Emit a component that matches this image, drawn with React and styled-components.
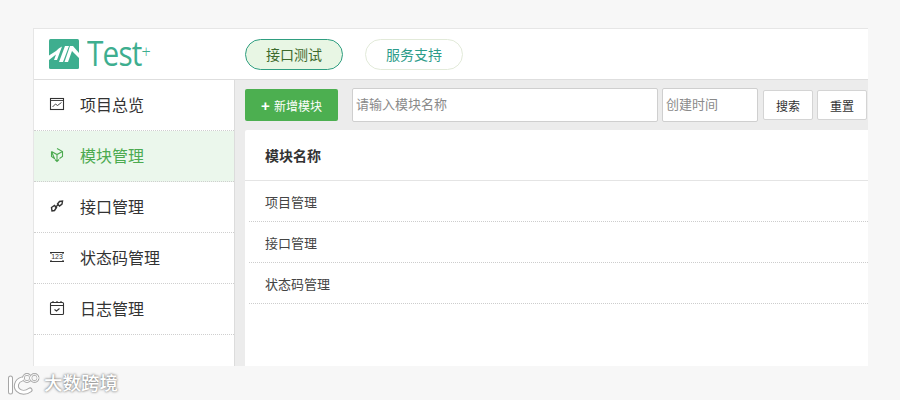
import styled, { createGlobalStyle } from "styled-components";

const GlobalStyle = createGlobalStyle`
  html, body {
    margin: 0;
    padding: 0;
    background: #f7f7f7;
    font-family: "Liberation Sans", "Noto Sans CJK SC", sans-serif;
    color: #333;
  }
  * {
    box-sizing: border-box;
  }
`;

const Page = styled.div`
  position: relative;
  width: 900px;
  height: 400px;
  padding: 28px 32px 0 33px;
  overflow: hidden;
`;

const Shell = styled.div`
  width: 835px;
  height: 338px;
  background: #fff;
  border-top: 1px solid #e6e6e6;
  border-left: 1px solid #e6e6e6;
  display: flex;
  flex-direction: column;
  overflow: hidden;
`;

const Header = styled.header`
  height: 51px;
  flex: none;
  display: flex;
  align-items: center;
  padding-left: 15px;
  border-bottom: 1px solid #dedede;
`;

const Logo = styled.div`
  width: 196px;
  display: flex;
  align-items: center;
  gap: 8px;
  color: #3eae8f;
`;

const LogoText = styled.span`
  font-family: "Open Sans", sans-serif;
  font-weight: 400;
  font-size: 35px;
  line-height: 32px;
  letter-spacing: -1px;
  display: inline-block;
  transform: scaleX(0.85);
  transform-origin: left center;
  position: relative;
  top: -1px;

  sup {
    font-size: 19px;
    font-weight: 300;
    line-height: 0;
    vertical-align: 8px;
    letter-spacing: 0;
  }
`;

const Nav = styled.nav`
  display: flex;
  gap: 22px;
`;

const Pill = styled.a`
  width: 98px;
  height: 31px;
  border-radius: 16px;
  display: flex;
  align-items: center;
  justify-content: center;
  font-size: 14px;
  padding-bottom: 1px;
  border: 1px solid ${(p) => (p.$active ? "#2f9e80" : "#e2ead9")};
  background: ${(p) => (p.$active ? "#e8f6e4" : "#fff")};
  color: ${(p) => (p.$active ? "#3c6a2c" : "#2d9c8a")};
`;

const Body = styled.div`
  flex: 1;
  display: flex;
  min-height: 0;
`;

const Sidebar = styled.aside`
  width: 201px;
  flex: none;
  border-right: 1px solid #dcdcdc;
  background: #fff;
`;

const MenuItem = styled.div`
  height: 51px;
  display: flex;
  align-items: center;
  padding: 0 0 2px 15px;
  gap: 15px;
  font-size: 16px;
  border-bottom: 1px dotted #cfcfcf;
  background: ${(p) => (p.$active ? "#ebf7ec" : "#fff")};
  color: ${(p) => (p.$active ? "#4caa50" : "#333")};

  svg {
    width: 16px;
    height: 16px;
    flex: none;
  }
`;

const Content = styled.main`
  flex: 1;
  min-width: 0;
  background: #ececec;
  display: flex;
  flex-direction: column;
  padding-left: 10px;
`;

const Toolbar = styled.div`
  height: 50px;
  flex: none;
  display: flex;
  align-items: center;
`;

const AddButton = styled.button`
  width: 93px;
  height: 32px;
  margin-right: 14px;
  border: 0;
  border-radius: 2px;
  background: #4caf50;
  color: #fff;
  font: inherit;
  font-size: 12px;
  padding: 0;
  display: flex;
  align-items: center;
  justify-content: center;
  gap: 4px;

  b {
    font-size: 15px;
    line-height: 15px;
  }
`;

const Field = styled.input`
  width: ${(p) => p.$w}px;
  height: 34px;
  margin-right: 4px;
  border: 1px solid #cfcfcf;
  border-radius: 2px;
  padding: 0 3px 2px;
  background: #fff;
  font: inherit;
  font-size: 13px;

  &::placeholder {
    color: #8a8a8a;
    opacity: 1;
  }
`;

const PlainButton = styled.button`
  width: 50px;
  height: 30px;
  margin-left: ${(p) => p.$ml || 0}px;
  border: 1px solid #d4d4d4;
  border-radius: 2px;
  background: #fff;
  color: #333;
  font: inherit;
  font-size: 12px;
  padding: 0;
`;

const Table = styled.section`
  flex: 1;
  background: #fff;
  border-radius: 2px 0 0 0;
`;

const TableHead = styled.div`
  height: 51px;
  padding-left: 20px;
  display: flex;
  align-items: center;
  font-size: 14px;
  font-weight: 700;
  color: #333;
  border-bottom: 1px solid #e4e4e4;
`;

const Row = styled.div`
  height: 41px;
  margin-left: 4px;
  padding-left: 16px;
  display: flex;
  align-items: center;
  font-size: 13px;
  color: #444;
  border-bottom: 1px dotted #cdcdcd;
`;

const Watermark = styled.div`
  position: absolute;
  left: 8px;
  top: 372px;
  display: flex;
  align-items: center;
  font-size: 18.5px;
  font-weight: 500;
  line-height: 22px;
  color: #fff;
  text-shadow: 0 0 2px #7c7c7c, 0 0 3px #999;
`;

const LogoMark = () => (
  <svg width="30" height="30" viewBox="0 0 30 30">
    <rect width="30" height="30" rx="1.5" fill="#3eae8f" />
    <path
      d="M0 16.5L7 12Q10 8.5 13 7.5L8 21H5L7 15.5L0 21ZM16 7H20L14 23H10ZM21 7H24L30 14V19L23 12L19 23H15.5Z"
      fill="#fff"
    />
  </svg>
);

const stroke = { fill: "none", stroke: "#333", strokeWidth: 1.1 };

const ChartIcon = () => (
  <svg viewBox="0 0 16 16" {...stroke}>
    <rect x="1.5" y="2.5" width="13" height="11" />
    <path d="M1.5 4.5H14.5M3.5 11L6.5 8L8.5 9.5L12.5 6.5" strokeWidth="0.9" />
  </svg>
);

const BoxIcon = () => (
  <svg viewBox="0 0 16 16" {...stroke} stroke="#4caa50">
    <path d="M8 1.5L13.5 4.5V9.5L10.5 11.5M5.5 11.5L2.5 9.5V4.5ZM2.5 4.5L8 7.5L13.5 4.5M8 7.5V14.5M6 12.5L8 14.5L10 12.5" />
  </svg>
);

const LinkIcon = () => (
  <svg viewBox="0 0 16 16" {...stroke} strokeWidth="1.4">
    <path d="M2.5 9.5L5.5 7.5L7.5 9.5L5.5 12.5L3 13Z" />
    <path d="M8.5 6L10.5 3.5L13.5 3L13 6L10.5 8Z" />
    <path d="M6 9.5L9.5 6.5" />
  </svg>
);

const CodeIcon = () => (
  <svg viewBox="0 0 16 16" {...stroke}>
    <path d="M1 3.5H15M1 12.5H15M2 3.5V5M14 3.5V5M2 11V12.5M14 11V12.5" />
    <text x="8" y="10.4" fontSize="7" fontFamily="Liberation Sans" fill="#333" stroke="none" textAnchor="middle">
      123
    </text>
  </svg>
);

const CalendarIcon = () => (
  <svg viewBox="0 0 16 16" {...stroke}>
    <rect x="1.5" y="2.5" width="13" height="12" rx="1" />
    <path d="M1.5 5.5H14.5M4 1V3M8 1V3M12 1V3M5.5 9.5L7.5 11L10.5 8.5" />
  </svg>
);

const WatermarkMark = () => (
  <svg width="36" height="24" viewBox="0 0 36 24" fill="none">
    <g stroke="#a6a6a6" strokeLinecap="round">
      <path d="M2.5 6V20" strokeWidth="5" />
      <path d="M14 7C8 9 7 15 10 18C13 21 18 21 22 18" strokeWidth="5" />
      <circle cx="19" cy="6" r="3.6" strokeWidth="2.6" />
      <circle cx="26.5" cy="6" r="3.6" strokeWidth="2.6" />
    </g>
    <g stroke="#fff" strokeLinecap="round">
      <path d="M2.5 6V20" strokeWidth="3" />
      <path d="M14 7C8 9 7 15 10 18C13 21 18 21 22 18" strokeWidth="3" />
      <circle cx="19" cy="6" r="3.6" strokeWidth="1" />
      <circle cx="26.5" cy="6" r="3.6" strokeWidth="1" />
    </g>
  </svg>
);

const menu = [
  { label: "项目总览", Icon: ChartIcon },
  { label: "模块管理", Icon: BoxIcon, active: true },
  { label: "接口管理", Icon: LinkIcon },
  { label: "状态码管理", Icon: CodeIcon },
  { label: "日志管理", Icon: CalendarIcon },
];

const rows = ["项目管理", "接口管理", "状态码管理"];

export default function App() {
  return (
    <Page>
      <GlobalStyle />
      <Shell>
        <Header>
          <Logo>
            <LogoMark />
            <LogoText>
              Test<sup>+</sup>
            </LogoText>
          </Logo>
          <Nav>
            <Pill $active>接口测试</Pill>
            <Pill>服务支持</Pill>
          </Nav>
        </Header>
        <Body>
          <Sidebar>
            {menu.map(({ label, Icon, active }) => (
              <MenuItem key={label} $active={active}>
                <Icon />
                {label}
              </MenuItem>
            ))}
          </Sidebar>
          <Content>
            <Toolbar>
              <AddButton>
                <b>+</b>新增模块
              </AddButton>
              <Field $w={306} placeholder="请输入模块名称" />
              <Field $w={96} placeholder="创建时间" />
              <PlainButton $ml={1}>搜索</PlainButton>
              <PlainButton $ml={4}>重置</PlainButton>
            </Toolbar>
            <Table>
              <TableHead>模块名称</TableHead>
              {rows.map((r) => (
                <Row key={r}>{r}</Row>
              ))}
            </Table>
          </Content>
        </Body>
      </Shell>
      <Watermark>
        <WatermarkMark />
        大数跨境
      </Watermark>
    </Page>
  );
}
